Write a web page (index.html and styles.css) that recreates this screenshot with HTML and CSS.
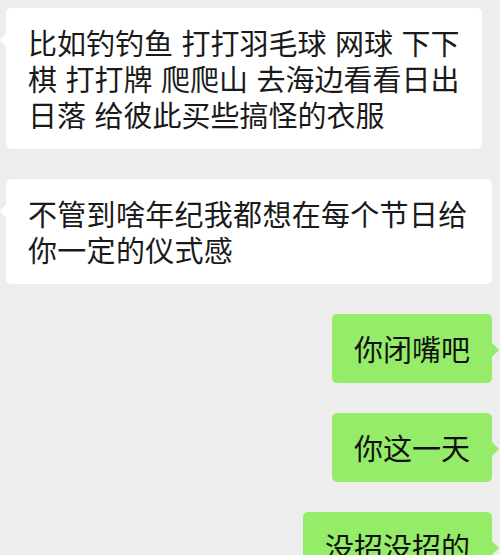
FILE: index.html
```html
<!DOCTYPE html>
<html lang="zh-CN">
<head>
<meta charset="utf-8">
<link rel="stylesheet" href="styles.css">
</head>
<body>
<div class="chat">
  <div class="row row-left">
    <div class="bubble bubble-left">比如钓钓鱼 打打羽毛球 网球 下下<br>棋 打打牌 爬爬山 去海边看看日出<br>日落 给彼此买些搞怪的衣服</div>
  </div>
  <div class="row row-left">
    <div class="bubble bubble-left bubble-wide">不管到啥年纪我都想在每个节日给<br>你一定的仪式感</div>
  </div>
  <div class="row row-right">
    <div class="bubble bubble-right">你闭嘴吧</div>
  </div>
  <div class="row row-right">
    <div class="bubble bubble-right">你这一天</div>
  </div>
  <div class="row row-right">
    <div class="bubble bubble-right">没招没招的</div>
  </div>
</div>
</body>
</html>
```
FILE: styles.css
```css
html, body {
  margin: 0;
  padding: 0;
  background: #ededed;
  height: 100%;
  overflow: hidden;
}

.chat {
  display: flex;
  flex-direction: column;
  gap: 30px;
  padding-top: 8px;
  font-family: "Noto Sans CJK SC", "Noto Sans", sans-serif;
  font-size: 29px;
  line-height: 36px;
  color: #1a1a1a;
  word-spacing: 2px;
}

.row {
  display: flex;
}

.row-left {
  justify-content: flex-start;
  padding-left: 6px;
}

.row-right {
  justify-content: flex-end;
  padding-right: 8px;
}

.bubble {
  position: relative;
  padding: 16px 22px 17px 22px;
  border-radius: 5px;
  white-space: nowrap;
}

.bubble-wide {
  letter-spacing: 0.3px;
  padding-right: 24px;
}

.bubble-left {
  background: #ffffff;
}

.bubble-right {
  background: #95ec69;
  color: #111;
}

.bubble-left::before {
  content: "";
  position: absolute;
  left: -6px;
  top: 25px;
  width: 0;
  height: 0;
  border-top: 7px solid transparent;
  border-bottom: 7px solid transparent;
  border-right: 6px solid #ffffff;
}

.bubble-right::after {
  content: "";
  position: absolute;
  right: -7px;
  top: 29px;
  width: 0;
  height: 0;
  border-top: 7px solid transparent;
  border-bottom: 7px solid transparent;
  border-left: 7px solid #95ec69;
}
```
